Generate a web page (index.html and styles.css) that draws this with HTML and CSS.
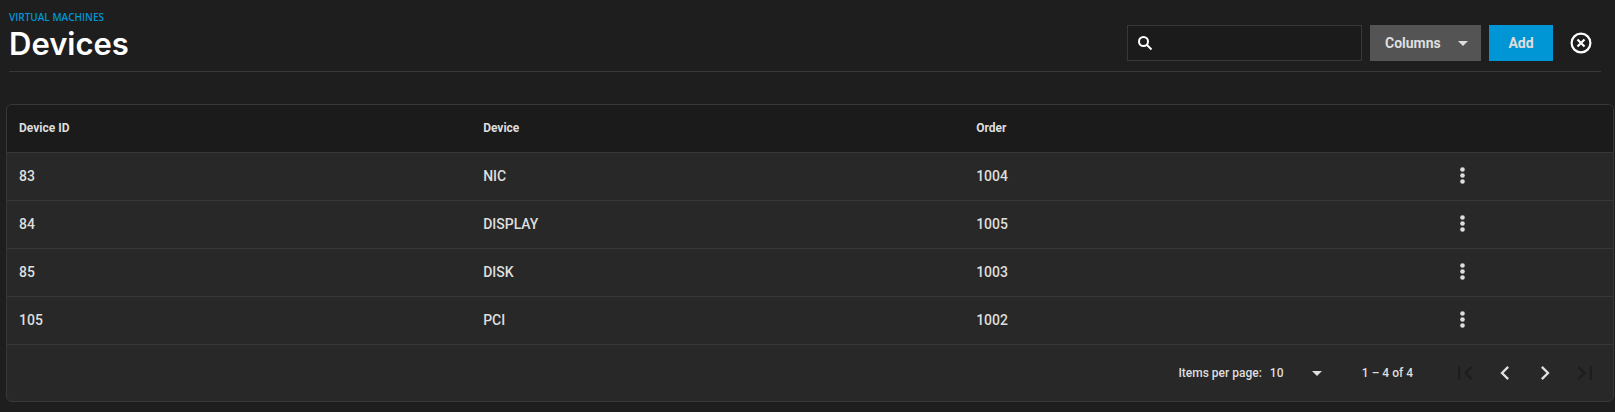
FILE: index.html
```
<!DOCTYPE html>
<html lang="en">
<head>
	<meta charset="UTF-8">
	<title>Devices</title>
	<link rel="stylesheet" href="styles.css">
</head>

<body>
<header class="page-header">
	<div class="heading">
		<a class="breadcrumb" href="#">VIRTUAL MACHINES</a>
		<h1>Devices</h1>
	</div>
	<div class="actions">
		<label class="search">
			<svg class="line" viewBox="0 0 18 18" width="18" height="18"><circle cx="7.500" cy="7.500" r="4.500" stroke-width="2"/><path d="M11 11l4.500 4.500" stroke-width="2"/></svg>
			<input type="text" aria-label="Search">
		</label>
		<button class="btn columns" type="button">
			Columns
			<svg viewBox="0 0 10 5" width="10" height="5"><path d="M0 0h10L5 5z"/></svg>
		</button>
		<button class="btn add" type="button">Add</button>
		<button class="close" type="button" aria-label="Close">
			<svg class="line" viewBox="0 0 24 24" width="24" height="24"><circle cx="12" cy="12" r="9.400" stroke-width="2.200"/><path d="M8.500 8.500l7 7M15.500 8.500l-7 7" stroke-width="2.200"/></svg>
		</button>
	</div>
</header>

<main class="card">
	<table class="devices">
		<thead>
			<tr>
				<th class="col-id">Device ID</th>
				<th class="col-device">Device</th>
				<th class="col-order">Order</th>
				<th></th>
			</tr>
		</thead>
		<tbody>
			<tr>
				<td>83</td>
				<td>NIC</td>
				<td>1004</td>
				<td><button class="more" type="button" aria-label="Options"><svg viewBox="0 0 24 24" width="24" height="24"><circle cx="12.500" cy="5.500" r="2.300"/><circle cx="12.500" cy="11.500" r="2.300"/><circle cx="12.500" cy="17.500" r="2.300"/></svg></button></td>
			</tr>
			<tr>
				<td>84</td>
				<td>DISPLAY</td>
				<td>1005</td>
				<td><button class="more" type="button" aria-label="Options"><svg viewBox="0 0 24 24" width="24" height="24"><circle cx="12.500" cy="5.500" r="2.300"/><circle cx="12.500" cy="11.500" r="2.300"/><circle cx="12.500" cy="17.500" r="2.300"/></svg></button></td>
			</tr>
			<tr>
				<td>85</td>
				<td>DISK</td>
				<td>1003</td>
				<td><button class="more" type="button" aria-label="Options"><svg viewBox="0 0 24 24" width="24" height="24"><circle cx="12.500" cy="5.500" r="2.300"/><circle cx="12.500" cy="11.500" r="2.300"/><circle cx="12.500" cy="17.500" r="2.300"/></svg></button></td>
			</tr>
			<tr>
				<td>105</td>
				<td>PCI</td>
				<td>1002</td>
				<td><button class="more" type="button" aria-label="Options"><svg viewBox="0 0 24 24" width="24" height="24"><circle cx="12.500" cy="5.500" r="2.300"/><circle cx="12.500" cy="11.500" r="2.300"/><circle cx="12.500" cy="17.500" r="2.300"/></svg></button></td>
			</tr>
		</tbody>
	</table>
	<div class="paginator">
		<label for="page-size">Items per page:</label>
		<div class="page-size">
			<select id="page-size">
				<option>10</option>
				<option>50</option>
				<option>100</option>
			</select>
			<svg viewBox="0 0 10 5" width="10" height="5"><path d="M0 0h10L5 5z"/></svg>
		</div>
		<span class="range">1 – 4 of 4</span>
		<div class="pages">
			<button type="button" aria-label="First page" disabled><svg viewBox="0 0 24 24" width="28" height="28"><path d="M18.410 16.590L13.820 12l4.590-4.590L17 6l-6 6 6 6zM6 6h2v12H6z"/></svg></button>
			<button type="button" aria-label="Previous page"><svg viewBox="0 0 24 24" width="28" height="28"><path d="M15.410 7.410L14 6l-6 6 6 6 1.410-1.410L10.830 12z"/></svg></button>
			<button type="button" aria-label="Next page"><svg viewBox="0 0 24 24" width="28" height="28"><path d="M10 6L8.590 7.410 13.170 12l-4.580 4.590L10 18l6-6z"/></svg></button>
			<button type="button" aria-label="Last page" disabled><svg viewBox="0 0 24 24" width="28" height="28"><path d="M5.590 7.410L10.180 12l-4.590 4.590L7 18l6-6-6-6zM16 6h2v12h-2z"/></svg></button>
		</div>
	</div>
</main>
</body>
</html>
```
FILE: styles.css
```
* {
	box-sizing: border-box;
}
body {
	margin: 0;
	background: #1e1e1e;
	color: #dedede;
	font-family: Roboto, sans-serif;
	font-size: 14px;
	font-weight: 500;
}
svg {
	display: block;
	fill: currentColor;
}
svg.line {
	fill: none;
	stroke: currentColor;
}
button {
	border: none;
	padding: 0;
	background: none;
	color: inherit;
	cursor: pointer;
}
.page-header {
	display: flex;
	justify-content: space-between;
	margin: 0 14px 32px 9px;
	padding-top: 10px;
	padding-bottom: 8px;
	border-bottom: 1px solid #383838;
}
.breadcrumb {
	display: block;
	color: #0095d5;
	font-family: "Open Sans", sans-serif;
	font-size: 10px;
	font-weight: 600;
	line-height: 14px;
	text-decoration: none;
}
h1 {
	margin: 0;
	color: #fff;
	font-family: Inter, sans-serif;
	font-size: 31px;
	font-weight: 600;
	line-height: 39px;
}
.actions {
	display: flex;
	align-items: center;
	gap: 8px;
	padding-top: 15px;
	height: 51px;
}
.search {
	display: flex;
	align-items: center;
	gap: 8px;
	width: 235px;
	height: 36px;
	padding: 0 8px;
	background: #1b1b1b;
	border: 1px solid #383838;
	color: #fff;
}
.search input {
	flex: 1;
	min-width: 0;
	border: none;
	outline: none;
	background: none;
	color: #fff;
	font: inherit;
}
.btn {
	height: 36px;
	font-family: Roboto, sans-serif;
	font-size: 14px;
	font-weight: 700;
}
.columns {
	display: flex;
	align-items: center;
	justify-content: space-between;
	width: 111px;
	padding: 0 13px 0 15px;
	background: #545454;
}
.add {
	width: 64px;
	background: #0095d5;
}
.close {
	margin: 0 8px;
	color: #fff;
}
.card {
	margin: 0 1px 0 6px;
	background: #282828;
	border: 1px solid #383838;
	border-radius: 6px;
	overflow: hidden;
}
.devices {
	width: 100%;
	border-spacing: 0;
	table-layout: fixed;
}
.devices th,
.devices td {
	height: 48px;
	padding: 0 12px 2px;
	border-bottom: 1px solid #383838;
	text-align: left;
}
.devices th {
	background: #1b1b1b;
	font-size: 12px;
	font-weight: 700;
}
.devices .more {
	display: block;
}
.col-id {
	width: 28.9%;
}
.col-device {
	width: 30.7%;
}
.col-order {
	width: 29.5%;
}
.paginator {
	display: flex;
	align-items: center;
	justify-content: flex-end;
	height: 56px;
	padding-right: 8px;
	font-size: 12px;
}
.page-size {
	display: grid;
	align-items: center;
	width: 56px;
	margin-left: 8px;
}
.page-size select,
.page-size svg {
	grid-area: 1 / 1;
}
.page-size svg {
	justify-self: end;
	margin-right: 4px;
	pointer-events: none;
}
.page-size select {
	appearance: none;
	border: none;
	padding: 0;
	background: none;
	color: inherit;
	font: inherit;
}
.range {
	margin: 0 32px 0 36px;
}
.pages {
	display: flex;
}
.pages button {
	display: grid;
	place-items: center;
	width: 40px;
	height: 40px;
}
.pages button:disabled {
	color: #1e1e1e;
	cursor: default;
}
```
